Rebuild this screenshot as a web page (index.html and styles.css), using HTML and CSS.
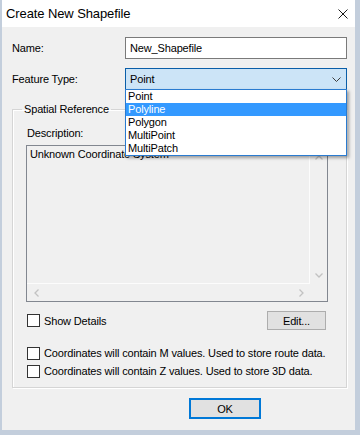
FILE: index.html
```html
<!DOCTYPE html>
<html>
<head>
<meta charset="utf-8">
<link rel="stylesheet" href="styles.css">
</head>
<body>
<div class="window">
  <div class="titlebar">
    <span class="title">Create New Shapefile</span>
    <svg class="close" width="10" height="10" viewBox="0 0 10 10"><path d="M0.5 0.5L9.5 9.5M9.5 0.5L0.5 9.5" stroke="#1a1a1a" stroke-width="1" fill="none"/></svg>
  </div>
  <div class="client">
    <div class="field-row">
      <span class="field-label">Name:</span>
      <div class="textbox">New_Shapefile</div>
    </div>
    <div class="field-row type-row">
      <span class="field-label">Feature Type:</span>
      <div class="combo">
        <span>Point</span>
        <svg class="combo-arrow" width="9" height="5" viewBox="0 0 9 5"><path d="M0.5 0.5L4.5 4.5L8.5 0.5" stroke="#3c3c3c" stroke-width="1" fill="none"/></svg>
        <ul class="combo-list">
          <li>Point</li>
          <li class="selected">Polyline</li>
          <li>Polygon</li>
          <li>MultiPoint</li>
          <li>MultiPatch</li>
        </ul>
      </div>
    </div>
    <fieldset class="group">
      <legend>Spatial Reference</legend>
      <div class="desc-label">Description:</div>
      <div class="desc-box">
        <div class="desc-content">Unknown Coordinate System</div>
        <div class="vscroll">
          <svg width="8" height="5" viewBox="0 0 8 5"><path d="M0.5 4.5L4 1L7.5 4.5" stroke="#c2c2c2" stroke-width="1.3" fill="none"/></svg>
          <svg width="8" height="5" viewBox="0 0 8 5"><path d="M0.5 0.5L4 4L7.5 0.5" stroke="#c2c2c2" stroke-width="1.3" fill="none"/></svg>
        </div>
        <div class="hscroll">
          <svg width="5" height="8" viewBox="0 0 5 8"><path d="M4.5 0.5L1 4L4.5 7.5" stroke="#c2c2c2" stroke-width="1.3" fill="none"/></svg>
          <svg width="5" height="8" viewBox="0 0 5 8"><path d="M0.5 0.5L4 4L0.5 7.5" stroke="#c2c2c2" stroke-width="1.3" fill="none"/></svg>
        </div>
        <div class="corner"></div>
      </div>
      <div class="details-row">
        <label class="check"><span class="box"></span>Show Details</label>
        <button class="btn edit">Edit...</button>
      </div>
      <div class="options">
        <label class="check"><span class="box"></span>Coordinates will contain M values. Used to store route data.</label>
        <label class="check"><span class="box"></span>Coordinates will contain Z values. Used to store 3D data.</label>
      </div>
    </fieldset>
    <div class="footer">
      <button class="btn ok">OK</button>
    </div>
  </div>
</div>
</body>
</html>
```

FILE: styles.css
```css
* { box-sizing: border-box; }
html, body { margin: 0; padding: 0; }
body {
  font-family: "Liberation Sans", Arial, sans-serif;
  font-size: 11px;
  letter-spacing: -0.15px;
  color: #000;
  background: #fff;
}
.window {
  width: 360px;
  height: 435px;
  display: flex;
  flex-direction: column;
  border-left: 2px solid #c3cedc;
  border-right: 5px solid #c3cedc;
  border-bottom: 5px solid #c3cedc;
}
.titlebar {
  height: 27px;
  background: #fff;
  display: flex;
  align-items: center;
  justify-content: space-between;
  padding: 0 6px 0 4px;
}
.title {
  font-size: 13px;
  letter-spacing: -0.1px;
}
.close { margin-right: 1px; }
.client {
  flex: 1;
  background: #f0f0f0;
  padding: 10px 8px 0 10px;
  display: flex;
  flex-direction: column;
}
.field-row {
  display: flex;
  align-items: center;
}
.type-row { margin-top: 9px; }
.field-label {
  width: 113px;
  line-height: 14px;
}
.textbox {
  flex: 1;
  height: 22px;
  border: 1px solid #7a7a7a;
  background: #fff;
  padding-left: 4px;
  line-height: 20px;
}
.combo {
  flex: 1;
  height: 22px;
  border: 1px solid #0a5ea8;
  background: #cce4f7;
  padding: 0 4px;
  line-height: 20px;
  display: flex;
  align-items: center;
  justify-content: space-between;
  position: relative;
  z-index: 5;
}
.combo-arrow { margin-right: 1px; margin-top: 1px; }
.combo-list {
  position: absolute;
  left: -1px;
  right: -1px;
  top: 100%;
  margin: 0;
  padding: 0;
  list-style: none;
  background: #fff;
  border: 1px solid #2a7bd0;
  box-shadow: 2px 2px 3px rgba(0, 0, 0, 0.35);
}
.combo-list li {
  height: 13px;
  line-height: 13px;
  padding-left: 2px;
}
.combo-list li.selected {
  background: #3399ff;
  color: #fff;
}
.group {
  margin: 12px 0 0 0;
  padding: 0 18px 7px 13px;
  border: 1px solid #d5d5d5;
  box-shadow: inset 1px 1px 0 #fff, 1px 1px 0 #fff;
  min-width: 0;
}
.group legend {
  padding: 0 2px;
  margin-left: -4px;
  line-height: 14px;
}
.desc-label {
  margin-top: 10px;
  margin-left: 1px;
  line-height: 14px;
}
.desc-box {
  margin-top: 5px;
  height: 157px;
  border: 1px solid #828790;
  display: grid;
  grid-template-columns: 1fr 17px;
  grid-template-rows: 1fr 17px;
  background: #f0f0f0;
}
.desc-content {
  padding: 1px 3px;
  line-height: 14px;
  border-right: 1px solid #fcfcfc;
  border-bottom: 1px solid #fcfcfc;
}
.vscroll {
  display: flex;
  flex-direction: column;
  justify-content: space-between;
  align-items: center;
  padding: 9px 0 6px;
}
.hscroll {
  display: flex;
  justify-content: space-between;
  align-items: center;
  padding: 0 6px 0 7px;
}
.details-row {
  margin-top: 9px;
  height: 19px;
  display: flex;
  align-items: center;
  justify-content: space-between;
}
.check {
  display: flex;
  align-items: center;
  gap: 4px;
  height: 18px;
  margin-left: 1px;
  line-height: 14px;
}
.box {
  width: 13px;
  height: 13px;
  border: 1px solid #333;
  background: #fff;
  flex: none;
}
.btn {
  font: inherit;
  letter-spacing: inherit;
  color: #000;
  background: #e1e1e1;
  border: 1px solid #adadad;
  padding: 0;
  margin: 0;
}
.edit {
  width: 59px;
  height: 19px;
  margin-right: 2px;
}
.options { margin-top: 14px; }
.footer {
  margin-top: 10px;
  display: flex;
}
.ok {
  margin-left: 177px;
  width: 72px;
  height: 21px;
  border: 2px solid #0078d7;
}
```
